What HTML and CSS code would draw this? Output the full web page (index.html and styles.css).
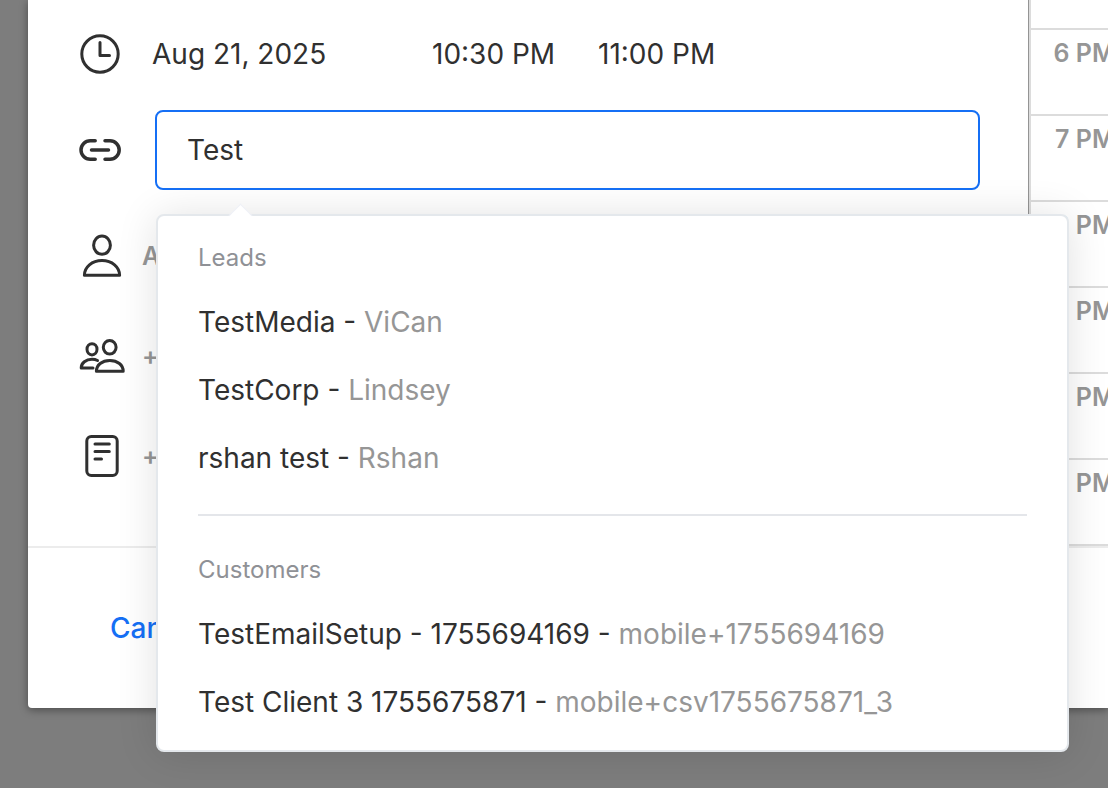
FILE: index.html
```html
<!DOCTYPE html>
<html lang="en">
<head>
<meta charset="utf-8">
<meta name="viewport" content="width=device-width, initial-scale=1">
<title>Event</title>
<link rel="stylesheet" href="styles.css">
</head>
<body>
<main class="modal">
  <div class="modal-body">
    <form class="event-form">
      <div class="row row-time">
        <svg class="icon" viewBox="0 0 52 52" aria-hidden="true"><circle cx="24" cy="26" r="18.2"/><path d="M24 14.5V27.5H33.5"/></svg>
        <div class="times">
          <button type="button" class="time-btn date">Aug 21, 2025</button>
          <button type="button" class="time-btn start">10:30 PM</button>
          <button type="button" class="time-btn">11:00 PM</button>
        </div>
      </div>
      <div class="row row-link">
        <svg class="icon icon-link" viewBox="0 0 52 52" aria-hidden="true"><path d="M19.2 16.8H14.2a9.2 9.2 0 0 0 0 18.4H19.2M29 16.8H34a9.2 9.2 0 0 1 0 18.4H29M15.5 26H32.5"/></svg>
        <div class="search">
          <input class="search-input" type="text" value="Test" aria-label="Link a lead or customer">
          <div class="popover">
            <section class="group">
              <h2 class="group-title">Leads</h2>
              <ul class="options">
                <li><button type="button" class="option">TestMedia - <span class="muted">ViCan</span></button></li>
                <li><button type="button" class="option">TestCorp - <span class="muted">Lindsey</span></button></li>
                <li><button type="button" class="option">rshan test - <span class="muted">Rshan</span></button></li>
              </ul>
            </section>
            <section class="group">
              <h2 class="group-title">Customers</h2>
              <ul class="options">
                <li><button type="button" class="option">TestEmailSetup - 1755694169 - <span class="muted">mobile+1755694169</span></button></li>
                <li><button type="button" class="option">Test Client 3 1755675871 - <span class="muted">mobile+csv1755675871_3</span></button></li>
              </ul>
            </section>
          </div>
        </div>
      </div>
      <div class="row">
        <svg class="icon" viewBox="0 0 52 52" aria-hidden="true"><ellipse cx="26" cy="15.2" rx="8.4" ry="9.1"/><path d="M8.4 45.3C8.4 37 16 30.5 26 30.5S43.6 37 43.6 45.3Z"/></svg>
        <button type="button" class="add-btn">A</button>
      </div>
      <div class="row">
        <svg class="icon" viewBox="0 0 52 52" aria-hidden="true"><ellipse cx="33.7" cy="17.3" rx="6.4" ry="6.8"/><path d="M20.4 41.3C20.4 35 26 30.5 33.8 30.5S47.2 35 47.2 41.3Z"/><ellipse cx="16" cy="19.3" rx="5" ry="5.6"/><path d="M17 38H5.2C5.2 33 10 29.3 16 29.3c2 0 4 .4 5.5 1.2"/></svg>
        <button type="button" class="add-btn">+</button>
      </div>
      <div class="row">
        <svg class="icon" viewBox="0 0 52 52" aria-hidden="true"><rect x="10.8" y="6.5" width="30.4" height="39" rx="4.5"/><path d="M19 14H33.3M19 21.5H33.3M19 29H25.5"/></svg>
        <button type="button" class="add-btn">+</button>
      </div>
    </form>
    <aside class="calendar">
      <ol class="hours">
        <li class="hour">6 PM</li>
        <li class="hour">7 PM</li>
        <li class="hour">8 PM</li>
        <li class="hour">9 PM</li>
        <li class="hour">10 PM</li>
        <li class="hour">11 PM</li>
      </ol>
    </aside>
  </div>
  <footer class="modal-footer">
    <button type="button" class="cancel">Cancel</button>
  </footer>
</main>
</body>
</html>
```
FILE: styles.css
```css
* {
  box-sizing: border-box;
}

body {
  margin: 0;
  min-height: 100vh;
  padding: 0 0 80px 28px;
  background: #7d7d7d;
  color: #303030;
  font-family: Inter, "Liberation Sans", sans-serif;
  font-size: 28px;
  line-height: 36px;
  overflow-x: hidden;
}

button,
input {
  font: inherit;
  color: inherit;
}

button {
  padding: 0;
  border: 0;
  background: none;
  text-align: left;
  white-space: nowrap;
  cursor: pointer;
}

ul,
ol {
  margin: 0;
  padding: 0;
  list-style: none;
}

.modal {
  background: #fff;
  border-bottom-left-radius: 4px;
  box-shadow: 0 2px 8px rgba(0, 0, 0, 0.4);
}

.modal-body {
  display: flex;
}

.event-form {
  flex: 1;
  min-width: 0;
  padding: 8px 48px 40px;
}

.row {
  display: flex;
  align-items: center;
  gap: 14px;
  height: 100px;
}

.row-time {
  gap: 24px;
  height: 92px;
}

.row-link {
  gap: 27px;
  margin-bottom: 6px;
}

.icon {
  flex: none;
  width: 52px;
  height: 52px;
  fill: none;
  stroke: #303030;
  stroke-width: 3;
  stroke-linecap: round;
  stroke-linejoin: round;
}

.icon-link {
  stroke-width: 3.5;
}

.times {
  display: flex;
}

.date {
  width: 280px;
}

.start {
  width: 166px;
}

.search {
  position: relative;
  flex: 1;
}

.search-input {
  display: block;
  width: 100%;
  height: 80px;
  padding: 0 30px;
  border: 2px solid #156ff5;
  border-radius: 8px;
  outline: 0;
  background: #fff;
}

.popover {
  position: absolute;
  z-index: 2;
  top: 104px;
  left: 1px;
  right: -89px;
  padding: 10px 40px 14px;
  border: 2px solid #e4e8ec;
  border-radius: 8px;
  background: #fff;
  box-shadow: 0 2px 40px rgba(0, 0, 0, 0.12);
}

.popover::before {
  content: "";
  position: absolute;
  top: -9px;
  left: 74px;
  width: 16px;
  height: 16px;
  border: solid #eff1f7;
  border-width: 1px 0 0 1px;
  background: linear-gradient(135deg, #fff 50%, transparent 50%);
  transform: rotate(45deg);
}

.group + .group {
  margin-top: 22px;
  padding-top: 22px;
  border-top: 2px solid #e4e6ea;
}

.group-title {
  margin: 0;
  padding-top: 2px;
  color: #8f9196;
  font-size: 24px;
  font-weight: 400;
  line-height: 60px;
}

.option {
  display: block;
  width: 100%;
  line-height: 68px;
}

.muted {
  color: #969696;
}

.add-btn {
  color: #969696;
  font-size: 25px;
  font-weight: 600;
}

.calendar {
  display: flex;
  flex: none;
  flex-direction: column;
  width: 80px;
  padding-top: 28px;
  border-left: 1px solid #949494;
  box-shadow: inset 2px 0 0 #dcdcdc;
  overflow: hidden;
}

.hours {
  width: 86px;
  border-bottom: 2px solid #dcdcdc;
}

.hour {
  height: 86px;
  padding-top: 5px;
  border-top: 2px solid #dcdcdc;
  color: #969696;
  font-size: 25px;
  font-weight: 600;
  text-align: right;
  white-space: nowrap;
}

.modal-footer {
  display: flex;
  align-items: center;
  height: 162px;
  padding-left: 82px;
  border-top: 2px solid #ececec;
}

.cancel {
  color: #156ff5;
  font-weight: 500;
}
```
